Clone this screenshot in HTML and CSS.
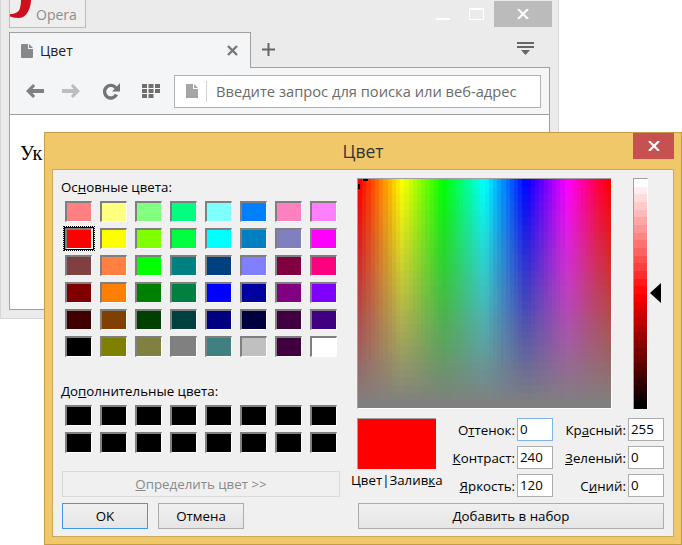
FILE: index.html
```html
<!DOCTYPE html>
<html lang="ru">
<head>
    <meta charset="utf-8">
    <title>Цвет</title>
    <link rel="stylesheet" href="styles.css">
</head>
<body>
    <div class="browser">
        <div class="titlebar">
            <div class="opera-btn">
                <svg class="opera-logo" width="22" height="19" viewBox="0 0 22 19"><path fill="#d00f1c" d="M11 0h10c0 7-4 18-12 18-3 0-6-.5-9-1.500v-2.500c5 0 9-2 10-6 .6-2.500 1-5 1-8z"/></svg>
                <span class="opera-name">Opera</span>
            </div>
            <div class="win-controls">
                <span class="win-min"></span>
                <span class="win-max"></span>
                <span class="win-close">
                    <svg width="12" height="10" viewBox="0 0 12 10"><path stroke="#fff" stroke-width="2.200" d="M1 0l10 10M11 0L1 10"/></svg>
                </span>
            </div>
        </div>
        <div class="tabstrip">
            <div class="tab">
                <svg class="page-icon" width="12" height="14" viewBox="0 0 12 14"><path fill="#888" d="M0 1a1 1 0 0 1 1-1h6v5h5v8a1 1 0 0 1-1 1H1a1 1 0 0 1-1-1zM8 0l4 4H8z"/></svg>
                <span class="tab-title">Цвет</span>
                <svg class="tab-close" width="11" height="11" viewBox="0 0 11 11"><path stroke="#777" stroke-width="2.400" d="M1 1l9 9M10 1l-9 9"/></svg>
            </div>
            <div class="tabstrip-rest">
                <svg class="tab-plus" width="13" height="13" viewBox="0 0 13 13"><path stroke="#666" stroke-width="2" d="M6.500 0v13M0 6.500h13"/></svg>
                <svg class="tab-menu" width="18" height="14" viewBox="0 0 18 14"><path fill="#666" d="M0 0h17v2H0zM0 4h17v2H0zM4 8h9l-4.500 5z"/></svg>
            </div>
        </div>
        <div class="panel">
            <div class="toolbar">
                <svg class="tool-back" width="18" height="14" viewBox="0 0 18 14"><path fill="#808080" d="M7 0l2.200 2L6.500 5H18v4H6.500l2.700 3L7 14 0 7z"/></svg>
                <svg class="tool-forward" width="18" height="14" viewBox="0 0 18 14"><path fill="#bdbdbd" d="M11 0L8.800 2l2.700 3H0v4h11.500l-2.700 3 2.200 2 7-7z"/></svg>
                <svg class="tool-reload" width="17" height="17" viewBox="0 0 17 17"><path fill="none" stroke="#757575" stroke-width="3.400" d="M13.500 11.500A6.300 6.300 0 1 1 13 5"/><path fill="#757575" d="M17 0v8.500H9z"/></svg>
                <svg class="tool-grid" width="18" height="14" viewBox="0 0 18 14"><path fill="#6e6e6e" d="M0 0h5v4H0zM6.500 0h5v4h-5zM13 0h5v4h-5zM0 5h5v4H0zM6.500 5h5v4h-5zM13 5h5v4h-5zM0 10h5v4H0zM6.500 10h5v4h-5z"/></svg>
                <div class="address">
                    <svg class="address-icon" width="12" height="14" viewBox="0 0 12 14"><path fill="#a6a6a6" d="M0 0h7v5h5v9H0zM8 0l4 4H8z"/></svg>
                    <span class="address-text">Введите запрос для поиска или веб-адрес</span>
                </div>
            </div>
            <div class="content">
                <p class="page-text">Ук</p>
            </div>
        </div>
    </div>

    <div class="dialog">
        <div class="dialog-title">
            <span class="dialog-name">Цвет</span>
            <span class="dialog-close">
                <svg width="12" height="10" viewBox="0 0 12 10"><path stroke="#fff" stroke-width="2.200" d="M1 0l10 10M11 0L1 10"/></svg>
            </span>
        </div>
        <div class="client">
            <div class="col-left">
                <div class="group-label">Ос<u>н</u>овные цвета:</div>
                <div class="swatches" id="basic-colors"></div>
                <div class="group-label custom-label">До<u>п</u>олнительные цвета:</div>
                <div class="swatches" id="custom-colors"></div>
                <button class="btn btn-define" type="button"><u>О</u>пределить цвет &gt;&gt;</button>
                <div class="btn-row">
                    <button class="btn btn-ok" type="button">OK</button>
                    <button class="btn btn-cancel" type="button">Отмена</button>
                </div>
            </div>
            <div class="col-right">
                <div class="pickers">
                    <div class="spectrum">
                        <canvas id="spectrum" width="253" height="229"></canvas>
                        <span class="cross-top"></span>
                        <span class="cross-left"></span>
                    </div>
                    <div class="lum">
                        <canvas id="lum" width="13" height="230"></canvas>
                    </div>
                    <svg class="lum-arrow" width="11" height="20" viewBox="0 0 11 20"><path d="M0 10L11 0v20z"/></svg>
                </div>
                <div class="values">
                    <div class="preview-box">
                        <div class="preview"></div>
                        <div class="preview-label">Цвет|Залив<u>к</u>а</div>
                    </div>
                    <div class="fields">
                        <label>О<u>т</u>тенок:</label><input class="field field-focus" value="0">
                        <label>Кр<u>а</u>сный:</label><input class="field" value="255">
                        <label><u>К</u>онтраст:</label><input class="field" value="240">
                        <label><u>З</u>еленый:</label><input class="field" value="0">
                        <label><u>Я</u>ркость:</label><input class="field" value="120">
                        <label>С<u>и</u>ний:</label><input class="field" value="0">
                    </div>
                </div>
                <button class="btn btn-add" type="button"><u>Д</u>обавить в набор</button>
            </div>
        </div>
    </div>

    <script src="dialog.js"></script>
</body>
</html>
```

FILE: styles.css
```css
body {
    margin: 0;
    background: #fff;
    font-family: 'Open Sans', 'Liberation Sans', sans-serif;
    overflow: hidden;
    height: 545px;
}
u {
    text-underline-offset: 1px;
}

/* browser window behind the dialog */
.browser {
    width: 559px;
    height: 319px;
    box-sizing: border-box;
    background: #ebebeb;
    border: 1px solid #d6d6d6;
    border-top: none;
    display: flex;
    flex-direction: column;
}
.titlebar {
    height: 32px;
    display: flex;
    justify-content: space-between;
    align-items: flex-start;
    padding-left: 8px;
    padding-right: 6px;
}
.opera-btn {
    width: 77px;
    height: 28px;
    box-sizing: border-box;
    border: 1px solid #bdbdbd;
    border-top: none;
    background: #eeeeee;
    display: flex;
    align-items: flex-start;
    overflow: hidden;
}
.opera-logo {
    flex: none;
}
.opera-name {
    margin-left: 4px;
    margin-top: 6px;
    font-size: 14px;
    line-height: 18px;
    color: #8c8c8c;
}
.win-controls {
    display: flex;
    align-items: flex-start;
}
.win-min {
    width: 14px;
    height: 2px;
    margin-top: 18px;
    background: #fff;
}
.win-max {
    width: 15px;
    height: 12px;
    box-sizing: border-box;
    margin: 8px 10px 0 19px;
    border: 1px solid #fff;
    border-top-width: 2px;
}
.win-close {
    width: 58px;
    height: 26px;
    margin-top: 1px;
    background: #bbbbbb;
    display: flex;
    align-items: center;
    justify-content: center;
}
.tabstrip {
    height: 36px;
    display: flex;
    padding-left: 8px;
    padding-right: 8px;
}
.tab {
    width: 242px;
    box-sizing: border-box;
    border: 1px solid #a0a0a0;
    border-bottom: none;
    background: #f4f5f7;
    display: flex;
    align-items: center;
    padding-left: 11px;
    padding-right: 12px;
}
.page-icon {
    margin-right: 7px;
}
.tab-title {
    font-size: 14px;
    color: #222;
    flex: 1;
}
.tabstrip-rest {
    flex: 1;
    box-sizing: border-box;
    border-bottom: 1px solid #a0a0a0;
    display: flex;
    align-items: center;
    justify-content: space-between;
    padding: 0 15px 0 11px;
}
.tab-menu {
    margin-top: -1px;
}
.panel {
    flex: 1;
    margin: 0 8px 8px;
    border: 1px solid #a0a0a0;
    border-top: none;
    display: flex;
    flex-direction: column;
}
.toolbar {
    height: 46px;
    box-sizing: content-box;
    background: #f4f5f7;
    border-bottom: 1px solid #a0a0a0;
    display: flex;
    align-items: center;
    padding-left: 16px;
    padding-right: 8px;
}
.tool-forward {
    margin-left: 18px;
}
.tool-reload {
    margin-left: 23px;
}
.tool-grid {
    margin-left: 22px;
}
.address {
    flex: 1;
    height: 33px;
    box-sizing: border-box;
    margin-left: 14px;
    background: #fff;
    border: 1px solid #b0b0b0;
    display: flex;
    align-items: center;
    padding-left: 11px;
}
.address-icon {
    margin-right: 8px;
}
.address-text {
    border-left: 1px solid #d0d0d0;
    padding-left: 9px;
    font-size: 14.7px;
    line-height: 21px;
    color: #6b6b6b;
    white-space: nowrap;
}
.content {
    flex: 1;
    background: #fff;
}
.page-text {
    margin: 27px 0 0 10px;
    font-family: 'Liberation Serif', serif;
    font-size: 20px;
    color: #000;
}

/* colour dialog, a window of its own on top of the browser */
.dialog {
    position: absolute;
    left: 44px;
    top: 132px;
    width: 638px;
    height: 413px;
    box-sizing: border-box;
    background: #f0c869;
    border: 1px solid #c49c48;
    display: flex;
    flex-direction: column;
    font-size: 13.3px;
    color: #000;
}
.dialog-title {
    height: 36px;
    flex: none;
    display: flex;
    justify-content: space-between;
    align-items: flex-start;
    padding-right: 7px;
}
.dialog-name {
    flex: 1;
    text-align: center;
    margin-left: 48px;
    font-size: 17.5px;
    line-height: 36px;
    color: #333;
}
.dialog-close {
    width: 41px;
    height: 26px;
    background: #c75050;
    display: flex;
    align-items: center;
    justify-content: center;
}
.client {
    flex: none;
    width: 622px;
    height: 368px;
    margin-left: 7px;
    box-sizing: border-box;
    background: #f0f0f0;
    border: 1px solid #c9a95c;
    display: flex;
    padding: 8px 8px 0 9px;
}
.col-left {
    width: 278px;
    flex: none;
}
.col-right {
    width: 308px;
    margin-left: 17px;
    flex: none;
}
.group-label {
    height: 14px;
    line-height: 14px;
    white-space: nowrap;
    margin-top: 2px;
    margin-left: -1px;
}
.custom-label {
    margin-top: 27px;
}
.swatches {
    margin-top: 7px;
    padding-left: 3px;
    display: grid;
    grid-template-columns: repeat(8, 27px);
    grid-auto-rows: 21px;
    column-gap: 8px;
    row-gap: 6px;
}
.swatch {
    position: relative;
    box-sizing: border-box;
    border: solid;
    border-width: 2px 1px 1px 2px;
    border-color: #7f7f7f #fff #fff #7f7f7f;
}
/* black frame and dotted focus ring of the chosen colour */
.swatch-selected::after {
    content: "";
    position: absolute;
    left: -3px;
    top: -3px;
    width: 28px;
    height: 21px;
    border: 1px solid #000;
    outline: 1px dotted #000;
    outline-offset: 0;
}
.btn {
    display: block;
    box-sizing: border-box;
    height: 26px;
    padding: 0;
    font-family: inherit;
    font-size: 13.3px;
    color: #000;
    background: linear-gradient(#f0f0f0, #e5e5e5);
    border: 1px solid #acacac;
}
.btn-define {
    width: 278px;
    margin-top: 18px;
    background: #f0f0f0;
    border-color: #d9d9d9;
    color: #8a8a8a;
}
.btn-row {
    display: flex;
    gap: 10px;
    margin-top: 6px;
}
.btn-ok,
.btn-cancel {
    width: 86px;
}
.btn-ok {
    border-color: #3d9ae8;
}
.btn-add {
    width: 306px;
    margin: 6px 0 0 1px;
}
.pickers {
    display: flex;
    height: 231px;
}
.spectrum {
    position: relative;
    width: 255px;
    height: 231px;
    flex: none;
    box-sizing: border-box;
    border-top: 1px solid #a0a0a0;
    border-left: 1px solid #a0a0a0;
    border-right: 1px solid #fff;
    border-bottom: 1px solid #fff;
}
.spectrum canvas,
.lum canvas {
    display: block;
}
.cross-top {
    position: absolute;
    left: 5px;
    top: 0;
    width: 5px;
    height: 2px;
    background: #000;
}
.cross-left {
    position: absolute;
    left: 0;
    top: 5px;
    width: 2px;
    height: 5px;
    background: #000;
}
.lum {
    width: 15px;
    height: 231px;
    box-sizing: border-box;
    margin-left: 21px;
    border-top: 1px solid #a0a0a0;
    border-left: 1px solid #a0a0a0;
    border-right: 1px solid #fff;
    flex: none;
}
.lum-arrow {
    margin: 105px 0 0 2px;
}
.values {
    display: flex;
    margin-top: 9px;
    height: 79px;
}
.preview-box {
    width: 79px;
    flex: none;
}
.preview {
    height: 51px;
    box-sizing: border-box;
    background: #f00;
    border-top: 1px solid #a0a0a0;
    border-left: 1px solid #a0a0a0;
}
.preview-label {
    margin-top: 4px;
    margin-left: -6px;
    width: 91px;
    text-align: center;
    line-height: 14px;
    white-space: nowrap;
}
.fields {
    display: grid;
    grid-template-columns: 79px 36px 71px 36px;
    grid-auto-rows: 23px;
    row-gap: 5px;
    column-gap: 2px;
    align-items: center;
}
.fields label {
    text-align: right;
    white-space: nowrap;
}
.field {
    box-sizing: border-box;
    width: 36px;
    height: 23px;
    padding: 0 0 2px 2px;
    font-family: inherit;
    font-size: 13.3px;
    color: #000;
    background: #fff;
    border: 1px solid #acacac;
    outline: none;
    border-radius: 0;
}
.field-focus {
    border-color: #7eb4ea;
}
```

FILE: dialog.js
```js
const BASIC = [
    '#ff8080', '#ffff80', '#80ff80', '#00ff80', '#80ffff', '#0080ff', '#ff80c0', '#ff80ff',
    '#ff0000', '#ffff00', '#80ff00', '#00ff40', '#00ffff', '#0080c0', '#8080c0', '#ff00ff',
    '#804040', '#ff8040', '#00ff00', '#008080', '#004080', '#8080ff', '#800040', '#ff0080',
    '#800000', '#ff8000', '#008000', '#008040', '#0000ff', '#0000a0', '#800080', '#8000ff',
    '#400000', '#804000', '#004000', '#004040', '#000080', '#000040', '#400040', '#400080',
    '#000000', '#808000', '#808040', '#808080', '#408080', '#c0c0c0', '#400040', '#ffffff'
];

function addSwatches(id, colors) {
    const box = document.getElementById(id);
    colors.forEach((color, i) => {
        const cell = document.createElement('div');
        cell.className = 'swatch';
        cell.style.background = color;
        if (id === 'basic-colors' && i === 8) cell.classList.add('swatch-selected');
        box.appendChild(cell);
    });
}

addSwatches('basic-colors', BASIC);
addSwatches('custom-colors', new Array(16).fill('#000000'));

// the picker is drawn in blocks, like the real dialog
const spectrum = document.getElementById('spectrum').getContext('2d');
const HUES = 60;
const SATS = 30;
for (let h = 0; h < HUES; h++) {
    for (let s = 0; s < SATS; s++) {
        const x = Math.round(h * 253 / HUES);
        const y = Math.round(s * 229 / SATS);
        const hue = h * 360 / (HUES - 1);
        spectrum.fillStyle = `hsl(${hue}, ${100 - s * 100 / (SATS - 1)}%, 50%)`;
        spectrum.fillRect(x, y, 6, 9);
    }
}

const lum = document.getElementById('lum').getContext('2d');
const LUMS = 30;
for (let i = 0; i < LUMS; i++) {
    lum.fillStyle = `hsl(0, 100%, ${100 - i * 100 / (LUMS - 1)}%)`;
    lum.fillRect(0, Math.round(i * 230 / LUMS), 13, 9);
}
```
